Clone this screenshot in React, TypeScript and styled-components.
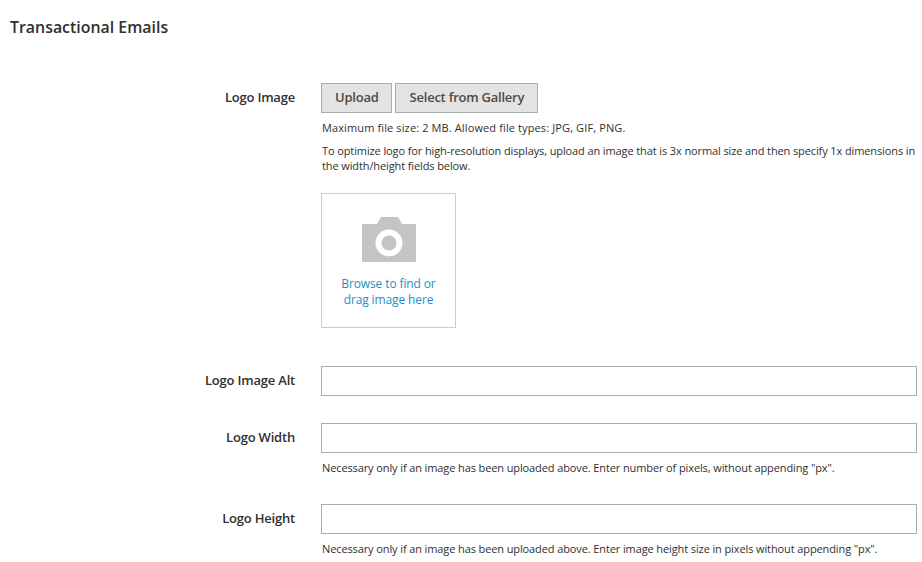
import React from "react";
import styled, { createGlobalStyle } from "styled-components";

const Global = createGlobalStyle`
  html, body { margin: 0; padding: 0; background: #fff; }
  body { font-family: "Open Sans", "Liberation Sans", sans-serif; color: #303030; }
  * { box-sizing: border-box; }
`;

const Page = styled.div`
  width: 922px;
  height: 562px;
  overflow: hidden;
  padding: 17px 5px 0 10px;
`;

const Title = styled.h2`
  margin: 0 0 45px;
  font-size: 15.900px;
  line-height: 21px;
  font-weight: 600;
  color: #303030;
`;

const Row = styled.div<{ $gap: number }>`
  display: grid;
  grid-template-columns: 285px 1fr;
  column-gap: 26px;
  margin-bottom: ${(p) => p.$gap}px;
`;

const Label = styled.label`
  text-align: right;
  font-size: 13px;
  letter-spacing: -0.2px;
  font-weight: 600;
  line-height: 18px;
  padding-top: 5px;
  color: #303030;
`;

const Control = styled.div`
  min-width: 0;
`;

const Buttons = styled.div`
  display: flex;
  gap: 3px;
  margin-bottom: 7px;
`;

const Button = styled.button<{ $left: number; $right: number }>`
  height: 30px;
  padding: 0 ${(p) => p.$right}px 2px ${(p) => p.$left}px;
  border: 1px solid #adadad;
  background: #e3e3e3;
  color: #514943;
  font-family: inherit;
  font-size: 13px;
  letter-spacing: -0.23px;
  font-weight: 600;
  line-height: 18px;
`;

const Note = styled.div<{ $gap?: number; $spacing?: number }>`
  font-size: 11px;
  letter-spacing: ${(p) => p.$spacing ?? -0.11}px;
  line-height: 15px;
  color: #303030;
  padding-left: 1px;
  margin-top: ${(p) => p.$gap ?? 0}px;
`;

const Drop = styled.div`
  width: 135px;
  height: 135px;
  margin-top: 20px;
  border: 1px solid #ccc;
  display: flex;
  flex-direction: column;
  align-items: center;
  padding-top: 22px;
`;

const DropText = styled.div`
  margin-top: 14px;
  width: 110px;
  text-align: center;
  font-size: 12px;
  letter-spacing: -0.12px;
  line-height: 16px;
  color: #1a8fc9;
`;

const Input = styled.input`
  display: block;
  width: 100%;
  height: 30px;
  border: 1px solid #adadad;
  background: #fff;
  outline: none;
`;

const Camera = () => (
  <svg width="54" height="46" viewBox="0 0 54 46" aria-hidden="true">
    <path
      fillRule="evenodd"
      fill="#c4c4c4"
      d="M1 8H15L19 1H36L40 8H53A1 1 0 0 1 54 9V45A1 1 0 0 1 53 46H1A1 1 0 0 1 0 45V9A1 1 0 0 1 1 8ZM27 13.5A13.5 13.5 0 1 0 27 40.500A13.500 13.500 0 1 0 27 13.500Z"
    />
    <circle cx="27" cy="27" r="7.500" fill="#c4c4c4" />
  </svg>
);

export default function App() {
  return (
    <>
      <Global />
      <Page>
        <Title>Transactional Emails</Title>
        <Row $gap={38}>
          <Label>Logo Image</Label>
          <Control>
            <Buttons>
              <Button $left={13} $right={12}>Upload</Button>
              <Button $left={14} $right={13}>Select from Gallery</Button>
            </Buttons>
            <Note $spacing={0.12}>Maximum file size: 2 MB. Allowed file types: JPG, GIF, PNG.</Note>
            <Note $gap={8}>
              To optimize logo for high-resolution displays, upload an image that is 3x normal size and then specify 1x dimensions in the width/height fields below.
            </Note>
            <Drop>
              <Camera />
              <DropText>Browse to find or drag image here</DropText>
            </Drop>
          </Control>
        </Row>
        <Row $gap={27}>
          <Label>Logo Image Alt</Label>
          <Control>
            <Input />
          </Control>
        </Row>
        <Row $gap={29}>
          <Label>Logo Width</Label>
          <Control>
            <Input />
            <Note $gap={7}>Necessary only if an image has been uploaded above. Enter number of pixels, without appending "px".</Note>
          </Control>
        </Row>
        <Row $gap={0}>
          <Label>Logo Height</Label>
          <Control>
            <Input />
            <Note $gap={7}>Necessary only if an image has been uploaded above. Enter image height size in pixels without appending "px".</Note>
          </Control>
        </Row>
      </Page>
    </>
  );
}
